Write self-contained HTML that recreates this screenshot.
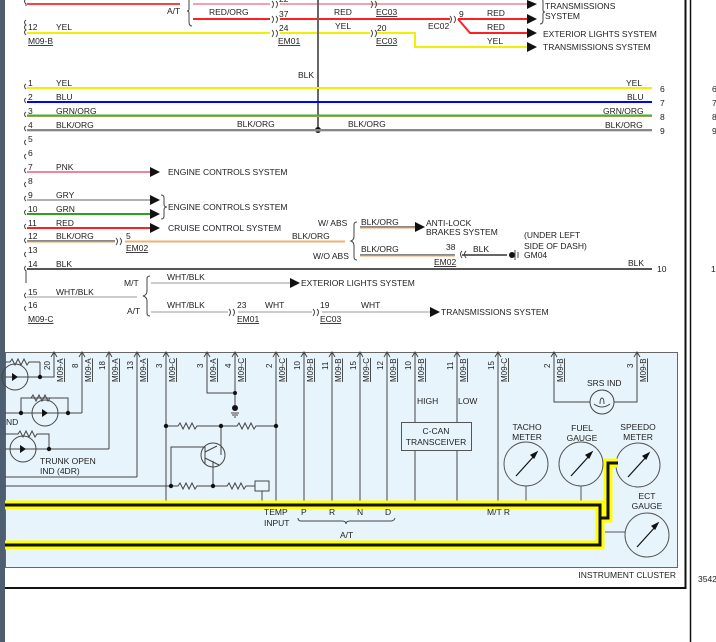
<!DOCTYPE html>
<html><head><meta charset="utf-8"><style>
html,body{margin:0;padding:0;background:#fff;width:716px;height:642px;overflow:hidden}
svg{display:block}
text{font-family:"Liberation Sans",Arial,sans-serif;font-size:8.5px;fill:#222}
.s text{font-size:8px}
</style></head><body>
<svg width="716" height="642" viewBox="0 0 716 642" xmlns="http://www.w3.org/2000/svg">
<rect x="0" y="0" width="5" height="642" fill="#4d5e70"/>
<line x1="685.5" y1="0" x2="685.5" y2="589" stroke="#111" stroke-width="2"/>
<line x1="690.5" y1="0" x2="690.5" y2="642" stroke="#111" stroke-width="1.5"/>
<line x1="5" y1="588" x2="686" y2="588" stroke="#111" stroke-width="2"/>
<text x="698" y="582">3542</text>
<text x="712" y="92">6</text><text x="712" y="106">7</text><text x="712" y="120">8</text><text x="712" y="134">9</text><text x="711" y="272">1</text>

<!-- TOP SECTION -->
<g fill="none" stroke-width="2">
<line x1="27" y1="4" x2="180" y2="4" stroke="#ff4040"/>
<line x1="193" y1="4" x2="270" y2="4" stroke="#f4a0b0"/>
<line x1="193" y1="19" x2="270" y2="19" stroke="#ff2020"/>
<line x1="27" y1="33" x2="270" y2="33" stroke="#f0f000"/>
<line x1="280" y1="4" x2="527" y2="4" stroke="#f4a0b0"/>
<line x1="280" y1="19" x2="450" y2="19" stroke="#ff2020"/>
<polyline points="458,19 527,19" stroke="#ff2020"/>
<polyline points="458,19 470,33 527,33" stroke="#ff2020"/>
<polyline points="280,33 370,33" stroke="#f0f000"/>
<polyline points="377,33 415,33 415,47 527,47" stroke="#f0f000"/>
</g>
<line x1="318" y1="0" x2="318" y2="130" stroke="#666" stroke-width="2"/>
<circle cx="318" cy="130" r="3" fill="#111"/>
<g fill="#111">
<polygon points="527,0 537,4 527,9"/><polygon points="527,14 537,19 527,24"/><polygon points="527,28 537,33 527,38"/><polygon points="527,42 537,47 527,52"/>
</g>
<g fill="none" stroke="#444" stroke-width="1">
<path d="M192,-4 q-3,0 -3,4 v9 q0,2 -2,2 q2,0 2,2 v9 q0,4 3,4"/>
<path d="M540,-2 q3,0 3,4 v8 q0,2 2,2 q-2,0 -2,2 v6 q0,4 -3,4"/>
<path d="M272,1 q3,3 0,7 M276,1 q3,3 0,7 M272,16 q3,3 0,7 M276,16 q3,3 0,7 M272,30 q3,3 0,7 M276,30 q3,3 0,7"/>
<path d="M371,1 q3,3 0,7 M375,1 q3,3 0,7 M371,30 q3,3 0,7 M375,30 q3,3 0,7 M450,16 q3,3 0,7 M454,16 q3,3 0,7"/>
<path d="M26,-6 q-3,2 0,5 q-3,2 0,5 v2 M26,20 q-3,2 0,5 q-3,2 0,5 q-3,2 0,5"/>
</g>
<text x="167" y="14">A/T</text>
<text x="209" y="15">RED/ORG</text>
<text x="279" y="2">22</text><text x="279" y="17">37</text><text x="279" y="31">24</text>
<text x="278" y="44" text-decoration="underline">EM01</text>
<text x="28" y="30">12</text><text x="56" y="30">YEL</text><text x="28" y="44" text-decoration="underline">M09-B</text>
<text x="334" y="15">RED</text><text x="335" y="29">YEL</text>
<text x="376" y="15" text-decoration="underline">EC03</text>
<text x="377" y="31">20</text><text x="376" y="44" text-decoration="underline">EC03</text>
<text x="428" y="29">EC02</text><text x="459" y="17">9</text>
<text x="487" y="16">RED</text><text x="487" y="30">RED</text><text x="487" y="44">YEL</text>
<text x="545" y="9">TRANSMISSIONS</text><text x="545" y="19">SYSTEM</text>
<text x="543" y="37">EXTERIOR LIGHTS SYSTEM</text>
<text x="543" y="50">TRANSMISSIONS SYSTEM</text>
<text x="298" y="78">BLK</text>

<!-- MAIN WIRES -->
<g fill="none" stroke-width="2">
<line x1="27" y1="88" x2="652" y2="88" stroke="#f0f000"/>
<line x1="27" y1="102" x2="652" y2="102" stroke="#0000ff"/>
<line x1="27" y1="116.5" x2="652" y2="116.5" stroke="#e8a060" stroke-width="1"/>
<line x1="27" y1="115.5" x2="652" y2="115.5" stroke="#40b040"/>
<line x1="27" y1="131" x2="652" y2="131" stroke="#e8a060" stroke-width="1"/>
<line x1="27" y1="130" x2="652" y2="130" stroke="#888"/>
<line x1="27" y1="172" x2="150" y2="172" stroke="#f0849a"/>
<line x1="27" y1="200" x2="150" y2="200" stroke="#b0b0b0"/>
<line x1="27" y1="214" x2="150" y2="214" stroke="#30a020"/>
<line x1="27" y1="228" x2="150" y2="228" stroke="#ff2020"/>
<line x1="27" y1="241" x2="115" y2="241" stroke="#888"/>
<line x1="27" y1="242" x2="115" y2="242" stroke="#e8a060" stroke-width="1"/>
<line x1="125" y1="241.5" x2="345" y2="241.5" stroke="#f0b070"/>
<line x1="360" y1="227" x2="415" y2="227" stroke="#888"/>
<line x1="360" y1="228" x2="415" y2="228" stroke="#e8a060" stroke-width="1"/>
<line x1="360" y1="255" x2="455" y2="255" stroke="#888"/>
<line x1="360" y1="256" x2="455" y2="256" stroke="#e8a060" stroke-width="1"/>
<line x1="462" y1="255" x2="507" y2="255" stroke="#666"/>
<line x1="27" y1="269" x2="652" y2="269" stroke="#555"/>
<line x1="27" y1="297" x2="137" y2="297" stroke="#ccc"/>
<line x1="151" y1="283" x2="290" y2="283" stroke="#ccc"/>
<line x1="151" y1="312" x2="228" y2="312" stroke="#ccc"/>
<line x1="238" y1="312" x2="312" y2="312" stroke="#ccc"/>
<line x1="322" y1="312" x2="430" y2="312" stroke="#ccc"/>
</g>
<g fill="#111">
<polygon points="150,167 160,172 150,177"/><polygon points="150,195 160,200 150,205"/><polygon points="150,209 160,214 150,219"/><polygon points="150,223 160,228 150,233"/>
<polygon points="415,222 425,227 415,232"/><polygon points="290,278 300,283 290,288"/><polygon points="430,307 440,312 430,317"/>
<circle cx="512" cy="255" r="3"/>
</g>
<g fill="none" stroke="#444" stroke-width="1">
<line x1="515" y1="250" x2="515" y2="260"/><line x1="518" y1="252" x2="518" y2="258"/>
<path d="M161,195 q3,0 3,3 v6 q0,3 3,3 q-3,0 -3,3 v6 q0,3 -3,3"/>
<path d="M357,222 q-3,0 -3,3 v11 q0,4 -3,5 q3,1 3,5 v11 q0,3 3,3"/>
<path d="M150,276 q-3,0 -3,3 v12 q0,4 -4,5 q4,1 4,5 v12 q0,3 3,3"/>
<path d="M116,238 q3,3 0,7 M120,238 q3,3 0,7 M229,309 q3,3 0,7 M233,309 q3,3 0,7 M313,309 q3,3 0,7 M317,309 q3,3 0,7"/>
<path d="M462,251 q-3,3 0,7 M466,251 q-3,3 0,7"/>
<path d="M26,84 q-3,2 0,5 M26,98 q-3,2 0,5 M26,112 q-3,2 0,5 M26,126 q-3,2 0,5 M26,140 q-3,2 0,5 M26,154 q-3,2 0,5 M26,168 q-3,2 0,5 M26,182 q-3,2 0,5 M26,196 q-3,2 0,5 M26,210 q-3,2 0,5 M26,224 q-3,2 0,5 M26,238 q-3,2 0,5 M26,252 q-3,2 0,5 M26,266 q-3,2 0,5 v12 M26,293 q-3,2 0,5 M26,306 q-3,2 0,5"/>
</g>
<g>
<text x="28" y="86">1</text><text x="56" y="86">YEL</text>
<text x="28" y="100">2</text><text x="56" y="100">BLU</text>
<text x="28" y="114">3</text><text x="56" y="114">GRN/ORG</text>
<text x="28" y="128">4</text><text x="56" y="128">BLK/ORG</text>
<text x="237" y="127">BLK/ORG</text><text x="348" y="127">BLK/ORG</text>
<text x="626" y="86">YEL</text><text x="627" y="100">BLU</text><text x="603" y="114">GRN/ORG</text><text x="605" y="128">BLK/ORG</text>
<text x="660" y="92">6</text><text x="660" y="106">7</text><text x="660" y="120">8</text><text x="660" y="134">9</text>
<text x="28" y="142">5</text><text x="28" y="156">6</text>
<text x="28" y="170">7</text><text x="56" y="170">PNK</text>
<text x="28" y="184">8</text>
<text x="28" y="198">9</text><text x="56" y="198">GRY</text>
<text x="28" y="212">10</text><text x="56" y="212">GRN</text>
<text x="28" y="226">11</text><text x="56" y="226">RED</text>
<text x="28" y="239">12</text><text x="56" y="239">BLK/ORG</text>
<text x="28" y="253">13</text>
<text x="28" y="267">14</text><text x="56" y="267">BLK</text>
<text x="28" y="295">15</text><text x="56" y="295">WHT/BLK</text>
<text x="28" y="308">16</text><text x="28" y="322" text-decoration="underline">M09-C</text>
<text x="168" y="175">ENGINE CONTROLS SYSTEM</text>
<text x="168" y="210">ENGINE CONTROLS SYSTEM</text>
<text x="168" y="231">CRUISE CONTROL SYSTEM</text>
<text x="126" y="239">5</text><text x="126" y="251" text-decoration="underline">EM02</text>
<text x="292" y="239">BLK/ORG</text>
<text x="318" y="226">W/ ABS</text><text x="313" y="259">W/O ABS</text>
<text x="361" y="225">BLK/ORG</text><text x="361" y="252">BLK/ORG</text>
<text x="426" y="226">ANTI-LOCK</text><text x="426" y="235">BRAKES SYSTEM</text>
<text x="446" y="250">38</text><text x="473" y="252">BLK</text>
<text x="434" y="265" text-decoration="underline">EM02</text>
<text x="524" y="238">(UNDER LEFT</text><text x="524" y="249">SIDE OF DASH)</text><text x="524" y="258">GM04</text>
<text x="628" y="266">BLK</text><text x="657" y="272">10</text>
<text x="124" y="286">M/T</text><text x="127" y="314">A/T</text>
<text x="167" y="280">WHT/BLK</text><text x="167" y="308">WHT/BLK</text>
<text x="301" y="286">EXTERIOR LIGHTS SYSTEM</text>
<text x="237" y="308">23</text><text x="237" y="322" text-decoration="underline">EM01</text>
<text x="265" y="308">WHT</text>
<text x="320" y="308">19</text><text x="320" y="322" text-decoration="underline">EC03</text>
<text x="361" y="308">WHT</text>
<text x="441" y="315">TRANSMISSIONS SYSTEM</text>
</g>

<!-- INSTRUMENT CLUSTER -->
<rect x="5.5" y="352.5" width="672" height="215" fill="#e8f4fc" stroke="#666" stroke-width="1"/>
<text x="676" y="578" text-anchor="end">INSTRUMENT CLUSTER</text>
<g stroke="#444" stroke-width="1" fill="none">
<path d="M54,352 V362 M82,352 V413 M109,352 V449 M137,352 V477 M166,352 V503 M207,352 V393 H235 M235,352 V405 M276,352 V503 M304,352 V503 M332,352 V503 M360,352 V503 M387,352 V503 M415,352 V422 M415,450 V503 M457,352 V422 M457,450 V503 M498,352 V503 M554,352 V402 H590 M614,402 H637 V352"/>
<path d="M51,357 L54,352 L57,357 M79,357 L82,352 L85,357 M106,357 L109,352 L112,357 M134,357 L137,352 L140,357 M163,357 L166,352 L169,357 M204,357 L207,352 L210,357 M232,357 L235,352 L238,357 M273,357 L276,352 L279,357 M301,357 L304,352 L307,357 M329,357 L332,352 L335,357 M357,357 L360,352 L363,357 M384,357 L387,352 L390,357 M412,357 L415,352 L418,357 M454,357 L457,352 L460,357 M495,357 L498,352 L501,357 M551,357 L554,352 L557,357 M634,357 L637,352 L640,357"/>
<path d="M5,377 H40 M40,362 V377 M40,377 H54 V362 M5,362 H10 l2,-3 3,6 3,-6 3,6 3,-6 3,6 2,-3 H40"/>
<path d="M5,413 H82 M21,413 V398 H68 V413 M31,398 l2,-3 3,6 3,-6 3,6 3,-6 3,6 2,-3"/>
<path d="M5,449 H109 M5,434 H18 l2,-3 3,6 3,-6 3,6 3,-6 3,6 2,-3 H49 V449"/>
<path d="M5,477 H137"/>
<path d="M166,426 H178 l2,-3 3,6 3,-6 3,6 3,-6 3,6 2,-3 H237 l2,-3 3,6 3,-6 3,6 3,-6 3,6 2,-3 H276"/>
<path d="M221,426 V455 M171,486 V447 H205"/>
<path d="M5,486 H178 l2,-3 3,6 3,-6 3,6 3,-6 3,6 2,-3 H227 l2,-3 3,6 3,-6 3,6 3,-6 3,6 2,-3 H255"/>
<rect x="255" y="481" width="14" height="10"/><path d="M262,491 V503"/>
<path d="M213,461 V486"/>
<circle cx="213" cy="455" r="12"/>
<path d="M205,446 V464 M205,452 L217,446 M205,458 L219,465"/>
<circle cx="15" cy="377" r="13"/><circle cx="45" cy="413" r="13"/><circle cx="23" cy="449" r="13"/>
<path d="M231,413 H239 M232,415 H238 M234,417 H236"/>
</g>
<g fill="#111">
<circle cx="40" cy="377" r="2.2"/><circle cx="21" cy="413" r="2.2"/><circle cx="68" cy="413" r="2.2"/><circle cx="49" cy="449" r="2.2"/>
<circle cx="166" cy="426" r="2.2"/><circle cx="221" cy="426" r="2.2"/><circle cx="276" cy="426" r="2.2"/>
<circle cx="171" cy="486" r="2.2"/><circle cx="213" cy="486" r="2.2"/><circle cx="235" cy="393" r="2"/><circle cx="235" cy="408" r="3"/>
<polygon points="12,373 18,377 12,381"/><polygon points="42,409 48,413 42,417"/><polygon points="20,445 26,449 20,453"/>
</g>
<text x="6" y="425">ND</text>
<text x="40" y="464">TRUNK OPEN</text><text x="40" y="474">IND (4DR)</text>
<g class="s">
<g transform="translate(50,370) rotate(-90)"><text>20</text></g><g transform="translate(63,382) rotate(-90)"><text text-decoration="underline">M09-A</text></g>
<g transform="translate(78,368) rotate(-90)"><text>8</text></g><g transform="translate(91,382) rotate(-90)"><text text-decoration="underline">M09-A</text></g>
<g transform="translate(105,370) rotate(-90)"><text>18</text></g><g transform="translate(118,382) rotate(-90)"><text text-decoration="underline">M09-A</text></g>
<g transform="translate(133,370) rotate(-90)"><text>13</text></g><g transform="translate(146,382) rotate(-90)"><text text-decoration="underline">M09-A</text></g>
<g transform="translate(162,368) rotate(-90)"><text>3</text></g><g transform="translate(175,382) rotate(-90)"><text text-decoration="underline">M09-C</text></g>
<g transform="translate(203,368) rotate(-90)"><text>3</text></g><g transform="translate(216,382) rotate(-90)"><text text-decoration="underline">M09-A</text></g>
<g transform="translate(231,368) rotate(-90)"><text>4</text></g><g transform="translate(244,382) rotate(-90)"><text text-decoration="underline">M09-C</text></g>
<g transform="translate(272,368) rotate(-90)"><text>2</text></g><g transform="translate(285,382) rotate(-90)"><text text-decoration="underline">M09-C</text></g>
<g transform="translate(300,370) rotate(-90)"><text>10</text></g><g transform="translate(313,382) rotate(-90)"><text text-decoration="underline">M09-B</text></g>
<g transform="translate(328,370) rotate(-90)"><text>11</text></g><g transform="translate(341,382) rotate(-90)"><text text-decoration="underline">M09-B</text></g>
<g transform="translate(356,370) rotate(-90)"><text>15</text></g><g transform="translate(369,382) rotate(-90)"><text text-decoration="underline">M09-C</text></g>
<g transform="translate(383,370) rotate(-90)"><text>12</text></g><g transform="translate(396,382) rotate(-90)"><text text-decoration="underline">M09-B</text></g>
<g transform="translate(411,370) rotate(-90)"><text>10</text></g><g transform="translate(424,382) rotate(-90)"><text text-decoration="underline">M09-B</text></g>
<g transform="translate(453,370) rotate(-90)"><text>11</text></g><g transform="translate(466,382) rotate(-90)"><text text-decoration="underline">M09-B</text></g>
<g transform="translate(494,370) rotate(-90)"><text>15</text></g><g transform="translate(507,382) rotate(-90)"><text text-decoration="underline">M09-C</text></g>
<g transform="translate(550,368) rotate(-90)"><text>2</text></g><g transform="translate(563,382) rotate(-90)"><text text-decoration="underline">M09-B</text></g>
<g transform="translate(633,368) rotate(-90)"><text>3</text></g><g transform="translate(646,382) rotate(-90)"><text text-decoration="underline">M09-B</text></g>
</g>
<circle cx="602" cy="402" r="12" fill="#e8f4fc" stroke="#444"/>
<path d="M594,404 q8,6 16,0 M600,404 q0,-6 2,-6 q2,0 2,6" fill="none" stroke="#444"/>
<text x="587" y="386">SRS IND</text>
<rect x="401.5" y="422.5" width="70" height="28" fill="#e8f4fc" stroke="#555"/>
<text x="436" y="434" text-anchor="middle">C-CAN</text><text x="436" y="445" text-anchor="middle">TRANSCEIVER</text>
<text x="417" y="404">HIGH</text><text x="458" y="404">LOW</text>
<g fill="none" stroke="#555" stroke-width="1">
<circle cx="526" cy="464" r="22"/><circle cx="581" cy="464" r="22"/><circle cx="638" cy="465" r="22"/><circle cx="647" cy="535" r="22"/>
<path d="M526,486 V503 M581,486 V503 M605,532 H625"/>
</g>
<g stroke="#111" stroke-width="1.2" fill="#111">
<line x1="516" y1="476" x2="535" y2="455"/><polygon points="537,452 531,455 534,458"/>
<line x1="571" y1="476" x2="590" y2="455"/><polygon points="592,452 586,455 589,458"/>
<line x1="628" y1="477" x2="647" y2="456"/><polygon points="649,453 643,456 646,459"/>
<line x1="637" y1="547" x2="656" y2="526"/><polygon points="658,523 652,526 655,529"/>
</g>
<text x="527" y="430" text-anchor="middle">TACHO</text><text x="527" y="440" text-anchor="middle">METER</text>
<text x="582" y="431" text-anchor="middle">FUEL</text><text x="582" y="441" text-anchor="middle">GAUGE</text>
<text x="638" y="430" text-anchor="middle">SPEEDO</text><text x="638" y="440" text-anchor="middle">METER</text>
<text x="647" y="499" text-anchor="middle">ECT</text><text x="647" y="509" text-anchor="middle">GAUGE</text>
<g fill="none" stroke-linejoin="miter">
<path d="M5,505 H600 V545 H5 M600,518 H608 V463 H618" stroke="#ffff00" stroke-width="9"/>
<path d="M5,505 H600 V545 H5 M600,518 H608 V463 H618" stroke="#111" stroke-width="3"/>
</g>
<text x="264" y="515">TEMP</text><text x="264" y="526">INPUT</text>
<text x="301" y="515">P</text><text x="329" y="515">R</text><text x="357" y="515">N</text><text x="385" y="515">D</text>
<text x="487" y="515">M/T R</text>
<path d="M298,518 q0,3 3,3 H342 q4,0 4,3 q0,-3 4,-3 H391 q3,0 4,-3" fill="none" stroke="#444"/>
<text x="340" y="538">A/T</text>
</svg>
</body></html>
